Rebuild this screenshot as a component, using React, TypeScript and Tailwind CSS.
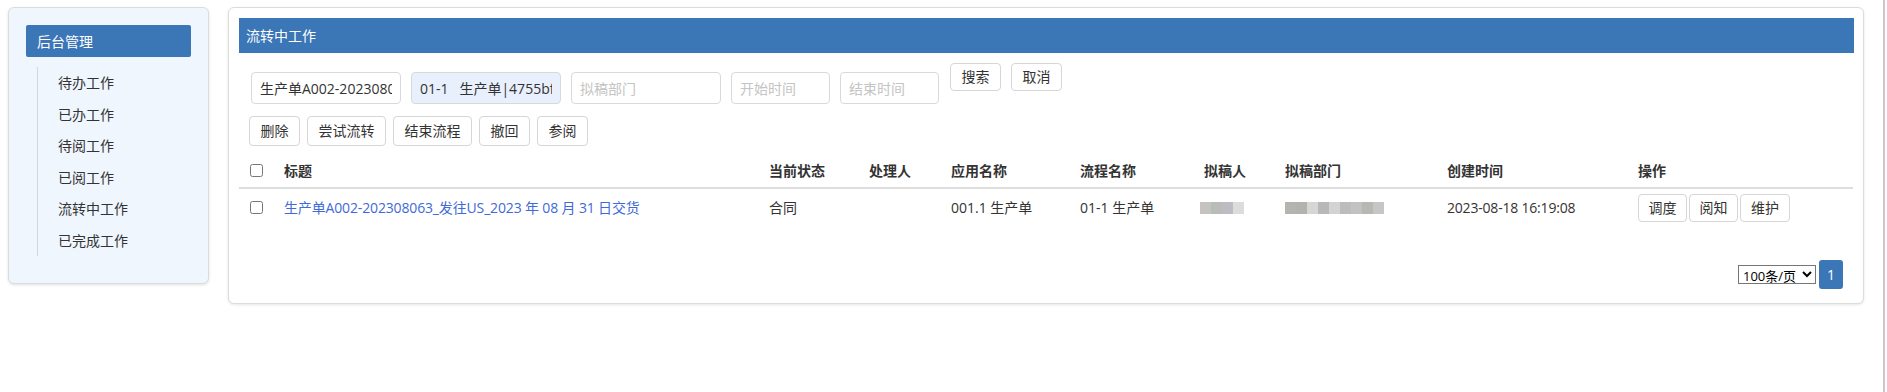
import React from "react";

const FONT = { fontFamily: '"Open Sans", "Noto Sans CJK SC", sans-serif' };

const menu = ["待办工作", "已办工作", "待阅工作", "已阅工作", "流转中工作", "已完成工作"];

const cols = "grid grid-cols-[45px_485px_100px_82px_129px_124px_81px_162px_191px_215px]";

function Btn({ children, cls }: { children: React.ReactNode; cls: string }) {
  return (
    <button className={`${cls} flex items-center justify-center border border-[#d6d6d6] rounded-[4px] bg-white text-[14px] text-[#333] leading-none`}>
      {children}
    </button>
  );
}

function Mosaic({ colors }: { colors: string[] }) {
  return (
    <div className="flex h-[12px]">
      {colors.map((c, i) => (
        <div key={i} className="w-[11px] h-full" style={{ background: c }} />
      ))}
    </div>
  );
}

export default function App() {
  return (
    <div className="flex h-[392px] bg-white pl-[8px] text-[#333]" style={FONT}>
      {/* Sidebar */}
      <div className="mt-[7px] w-[201px] h-[277px] shrink-0 border border-[#dcdcdc] rounded-[6px] bg-[#eff6fe] shadow-[0_1px_3px_rgba(0,0,0,0.12)] p-[17px]">
        <div className="h-[32px] bg-[#3b76b6] rounded-[2px] text-white text-[14px] flex items-center pl-[11px]">后台管理</div>
        <div className="mt-[10px] ml-[11px] border-l border-[#d6d6d6]">
          {menu.map((m) => (
            <div key={m} className="h-[31.5px] flex items-center pl-[20px] text-[14px] text-[#333]">
              {m}
            </div>
          ))}
        </div>
      </div>

      {/* Main */}
      <div className="mt-[7px] ml-[19px] w-[1636px] h-[297px] shrink-0 border border-[#dcdcdc] rounded-[6px] bg-white shadow-[0_1px_3px_rgba(0,0,0,0.1)] p-[10px] pr-[9px]">
        <div className="h-[35px] bg-[#3b76b6] text-white text-[14px] flex items-center pl-[7px]">流转中工作</div>

        {/* Search row */}
        <div className="mt-[10px] pl-[12px] flex items-start">
          <input
            readOnly
            value="生产单A002-202308063_发往US"
            className="mt-[9px] w-[150px] h-[32px] border border-[#d9d9d9] rounded-[4px] px-[8px] text-[14px] text-[#333] outline-none"
          />
          <input
            readOnly
            value="01-1   生产单|4755bf4a2c81"
            className="mt-[9px] ml-[10px] w-[150px] h-[32px] border border-[#d9d9d9] rounded-[4px] px-[8px] text-[14px] text-[#333] bg-[#e8f0fe] outline-none"
          />
          <input
            placeholder="拟稿部门"
            className="mt-[9px] ml-[10px] w-[150px] h-[32px] border border-[#d9d9d9] rounded-[4px] px-[8px] text-[14px] placeholder:text-[#c4c4c4] outline-none"
          />
          <input
            placeholder="开始时间"
            className="mt-[9px] ml-[10px] w-[99px] h-[32px] border border-[#d9d9d9] rounded-[4px] px-[8px] text-[14px] placeholder:text-[#c4c4c4] outline-none"
          />
          <input
            placeholder="结束时间"
            className="mt-[9px] ml-[10px] w-[99px] h-[32px] border border-[#d9d9d9] rounded-[4px] px-[8px] text-[14px] placeholder:text-[#c4c4c4] outline-none"
          />
          <div className="ml-[11px] flex gap-[10px]">
            <Btn cls="w-[51px] h-[28px]">搜索</Btn>
            <Btn cls="w-[51px] h-[28px]">取消</Btn>
          </div>
        </div>

        {/* Action row */}
        <div className="mt-[12px] pl-[10px] flex gap-[7px]">
          <Btn cls="w-[51px] h-[30px]">删除</Btn>
          <Btn cls="w-[79px] h-[30px]">尝试流转</Btn>
          <Btn cls="w-[79px] h-[30px]">结束流程</Btn>
          <Btn cls="w-[51px] h-[30px]">撤回</Btn>
          <Btn cls="w-[51px] h-[30px]">参阅</Btn>
        </div>

        {/* Table */}
        <div className="mt-[7px] w-[1614px]">
          <div className={`${cols} h-[36px] items-center border-b-2 border-[#dddddd] text-[14px] font-bold text-[#333]`}>
            <div className="pl-[11px] flex items-center">
              <input type="checkbox" className="w-[13px] h-[13px] m-0" />
            </div>
            <div>标题</div>
            <div>当前状态</div>
            <div>处理人</div>
            <div>应用名称</div>
            <div>流程名称</div>
            <div>拟稿人</div>
            <div>拟稿部门</div>
            <div>创建时间</div>
            <div>操作</div>
          </div>
          <div className={`${cols} h-[37px] items-center text-[14px] text-[#333]`}>
            <div className="pl-[11px] flex items-center">
              <input type="checkbox" className="w-[13px] h-[13px] m-0" />
            </div>
            <div className="text-[#3f6ad8] whitespace-nowrap tracking-[-0.15px]">生产单A002-202308063_发往US_2023 年 08 月 31 日交货</div>
            <div>合同</div>
            <div></div>
            <div>001.1 生产单</div>
            <div>01-1 生产单</div>
            <div className="flex">
              <div className="-ml-[4px]">
                <Mosaic colors={["#c6c2c2", "#b9bdb9", "#bdbcc5", "#dcdcdf"]} />
              </div>
            </div>
            <div className="flex">
              <Mosaic colors={["#b6b4b1", "#b3b2ae", "#d6d6d7", "#b8b8b6", "#d3d3d3", "#bbbcbb", "#c1c3c2", "#b8b7b4", "#c6c6c7"]} />
            </div>
            <div className="tracking-[-0.2px]">2023-08-18 16:19:08</div>
            <div className="flex">
              <Btn cls="w-[49px] h-[28px]">调度</Btn>
              <div className="ml-[2px]"><Btn cls="w-[49px] h-[28px]">阅知</Btn></div>
              <div className="ml-[2px]"><Btn cls="w-[50px] h-[28px]">维护</Btn></div>
            </div>
          </div>
        </div>

        {/* Pagination */}
        <div className="mt-[34px] w-[1614px] pr-[10px] flex justify-end items-center gap-[3px]">
          <select className="h-[19px] w-[78px] border border-[#767676] text-[13px] text-black bg-white" defaultValue="100">
            <option value="100">100条/页</option>
          </select>
          <div className="w-[24px] h-[29px] bg-[#3b76b6] rounded-[3px] text-white text-[14px] flex items-center justify-center">1</div>
        </div>
      </div>

      <div className="ml-[19px] w-[2px] self-stretch bg-[#c8c8c8]" />
    </div>
  );
}
